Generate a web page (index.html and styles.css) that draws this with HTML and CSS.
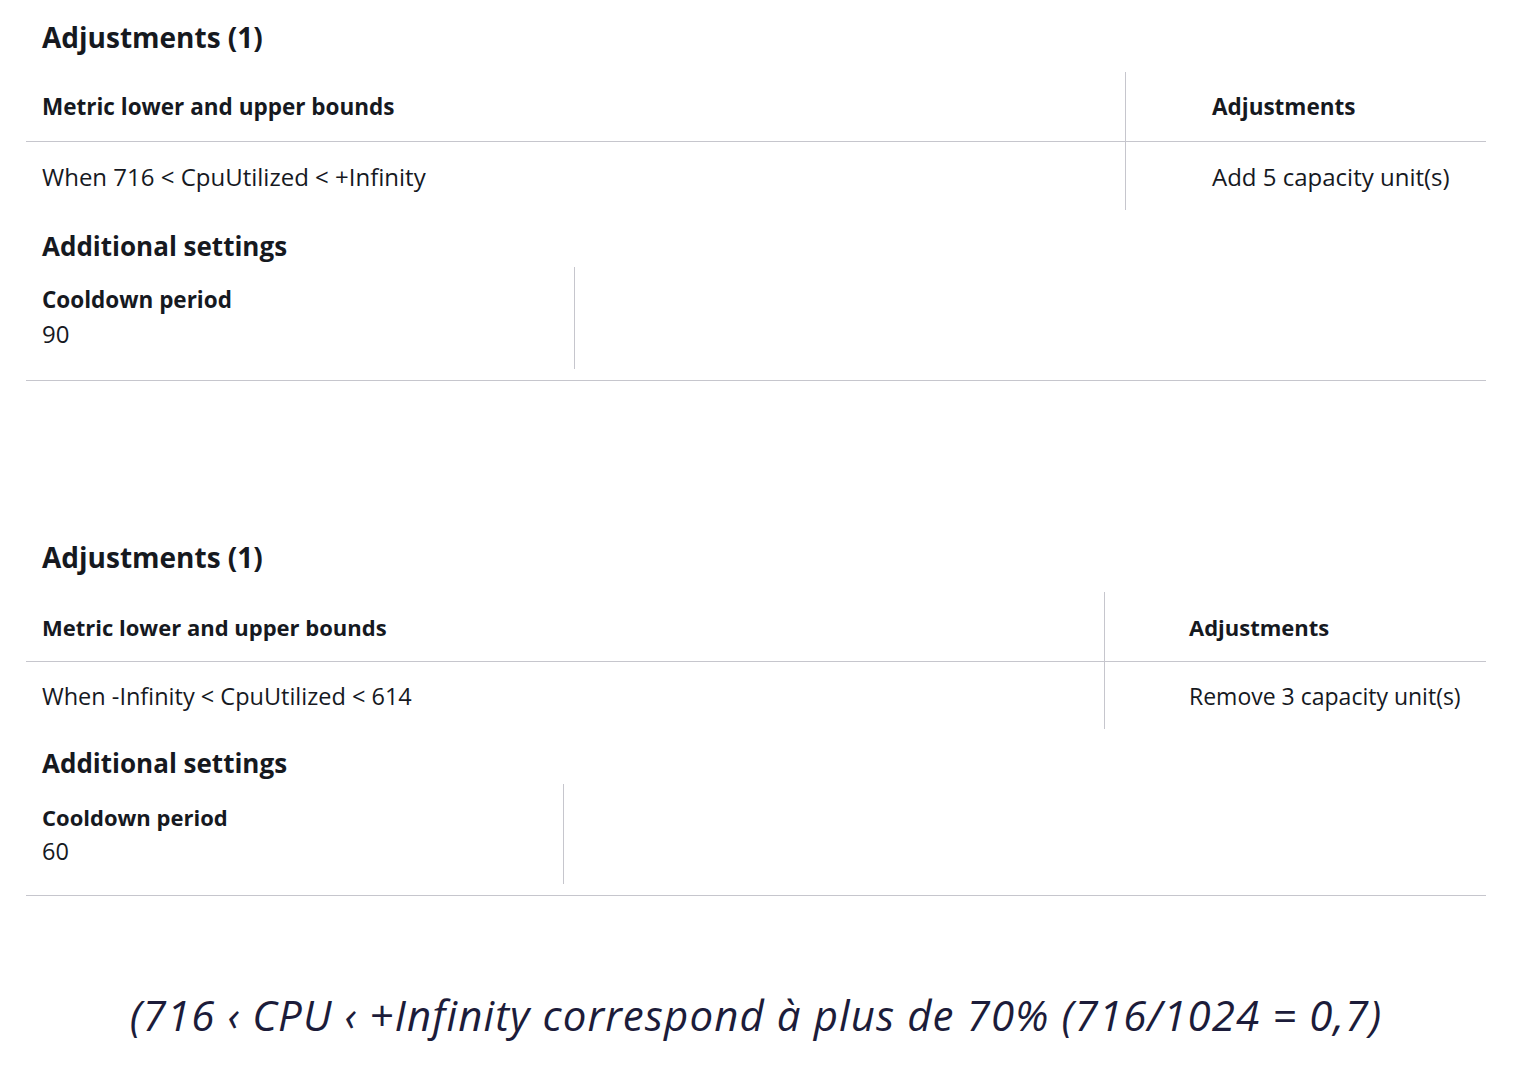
FILE: index.html
```html
<!DOCTYPE html>
<html lang="fr">
<head>
    <meta charset="UTF-8">
    <meta name="viewport" content="width=device-width, initial-scale=1.0">
    <title>Adjustments</title>
    <link rel="stylesheet" href="styles.css">
</head>
<body>
    <div class="page">
        <!-- Scale out policy -->
        <section class="policy policy-out">
            <h2 class="policy-title">Adjustments (1)</h2>
            <div class="adj-table">
                <div class="cell head">Metric lower and upper bounds</div>
                <div class="cell head col-2">Adjustments</div>
                <div class="cell">When 716 &lt; CpuUtilized &lt; +Infinity</div>
                <div class="cell col-2">Add 5 capacity unit(s)</div>
            </div>
            <h3 class="settings-title">Additional settings</h3>
            <div class="settings">
                <div class="setting">
                    <div class="setting-label">Cooldown period</div>
                    <div class="setting-value">90</div>
                </div>
                <div class="setting"></div>
            </div>
        </section>

        <!-- Scale in policy -->
        <section class="policy policy-in">
            <h2 class="policy-title">Adjustments (1)</h2>
            <div class="adj-table">
                <div class="cell head">Metric lower and upper bounds</div>
                <div class="cell head col-2">Adjustments</div>
                <div class="cell">When -Infinity &lt; CpuUtilized &lt; 614</div>
                <div class="cell col-2">Remove 3 capacity unit(s)</div>
            </div>
            <h3 class="settings-title">Additional settings</h3>
            <div class="settings">
                <div class="setting">
                    <div class="setting-label">Cooldown period</div>
                    <div class="setting-value">60</div>
                </div>
                <div class="setting"></div>
            </div>
        </section>

        <p class="note">(716 &lsaquo; CPU &lsaquo; +Infinity correspond à plus de 70% (716/1024 = 0,7)</p>
    </div>
</body>
</html>
```

FILE: styles.css
```css
body {
    margin: 0;
    background-color: #ffffff;
    font-family: "Open Sans", Arial, sans-serif;
    color: #16191f;
}
.page {
    padding: 0 42px 0 26px;
}
.policy {
    width: 1460px;
}
.policy-in {
    margin-top: 139px;
}
.policy-title {
    margin: 0;
    padding: 18px 0 0 16px;
    height: 54px;
    font-size: 28px;
    font-weight: 700;
    line-height: 38px;
    box-sizing: border-box;
}
.adj-table {
    display: grid;
    grid-template-columns: 1099px 1fr;
    margin-top: 18px;
}
.cell {
    display: flex;
    align-items: center;
    height: 68px;
    padding-left: 16px;
    font-size: 24px;
}
.cell.head {
    height: 69px;
    font-size: 22.5px;
    font-weight: 700;
    border-bottom: 1px solid #c6c6cd;
}
.cell.col-2 {
    border-left: 1px solid #c6c6cd;
    padding-left: 86px;
}
.settings-title {
    margin: 0;
    padding: 18px 0 0 16px;
    font-size: 26px;
    font-weight: 700;
    line-height: 36px;
}
.settings {
    display: grid;
    grid-template-columns: 548px 1fr;
    margin-top: 3px;
    padding-bottom: 11px;
    border-bottom: 1px solid #c6c6cd;
}
.setting {
    height: 102px;
    padding: 16px 0 0 16px;
    box-sizing: border-box;
}
.setting + .setting {
    border-left: 1px solid #c6c6cd;
}
.setting-label {
    font-size: 22.5px;
    font-weight: 700;
    line-height: 34px;
}
.setting-value {
    font-size: 24px;
    line-height: 34px;
}

/* second policy is shown a bit smaller */
.policy-in .adj-table {
    grid-template-columns: 1078px 1fr;
}
.policy-in .cell {
    height: 67px;
    font-size: 23.5px;
}
.policy-in .cell.head {
    height: 69px;
    font-size: 22px;
}
.policy-in .cell.col-2 {
    padding-left: 84px;
    font-size: 23px;
}
.policy-in .cell.head.col-2 {
    font-size: 22px;
}
.policy-in .settings-title {
    padding-top: 17px;
    line-height: 35px;
}
.policy-in .settings {
    grid-template-columns: 537px 1fr;
}
.policy-in .setting {
    height: 100px;
}
.policy-in .setting-label {
    font-size: 22px;
}
.policy-in .setting-value {
    font-size: 23.5px;
}

.note {
    margin: 90px 0 0 0;
    text-align: center;
    font-size: 42px;
    font-style: italic;
    letter-spacing: 1.1px;
    color: #1c1c3a;
}
```
